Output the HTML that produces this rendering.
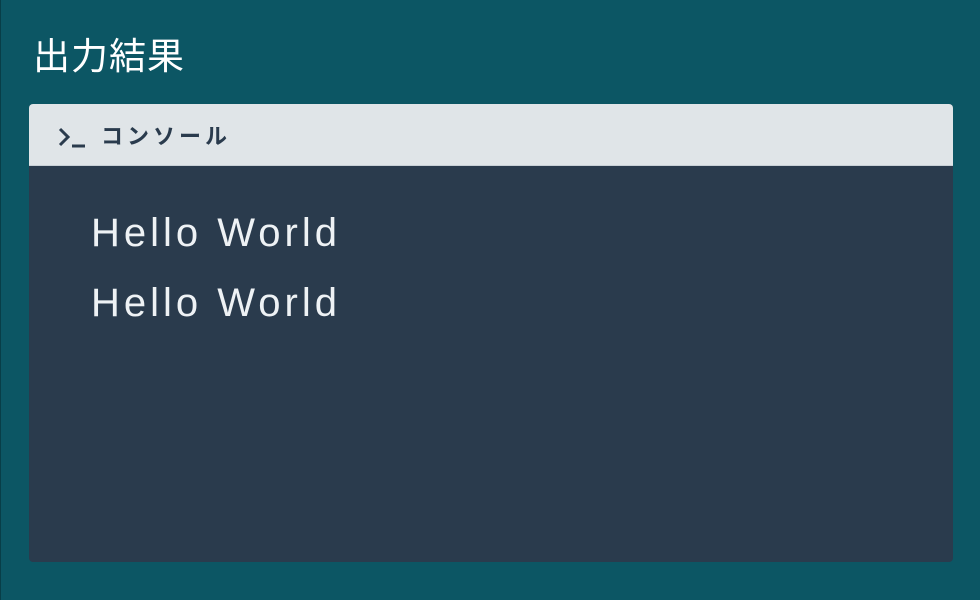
<!DOCTYPE html>
<html><head><meta charset="utf-8"><style>
html,body{margin:0;padding:0}
body{width:980px;height:600px;background:#0c5664;position:relative;overflow:hidden;font-family:"Liberation Sans","Noto Sans CJK JP",sans-serif;box-shadow:inset 1px 0 0 #083e48}
.t{position:absolute;left:33px;top:33px;font-size:37px;color:#fff;line-height:48px;letter-spacing:1px}
.p{position:absolute;left:29px;top:104px;width:924px;height:458px;background:#2a3b4d;border-radius:4px;overflow:hidden}
.h{height:61px;background:#e0e5e8;border-bottom:1px solid #c8d0d6;position:relative}
.h svg{position:absolute;left:29px;top:22px}
.h span{position:absolute;left:72px;top:20px;font-size:22px;font-weight:bold;color:#2a3b4d;letter-spacing:4px;line-height:26px}
.o{position:absolute;left:62px;font-size:40px;color:#eef2f5;letter-spacing:4px;font-weight:300;line-height:48px}
</style></head><body>
<div class="t">出力結果</div>
<div class="p">
<div class="h"><svg width="30" height="24" viewBox="0 0 30 24"><path d="M2 3 L10 11 L2 19" fill="none" stroke="#2a3b4d" stroke-width="3"/><path d="M14 20 H27" stroke="#2a3b4d" stroke-width="3"/></svg><span>コンソール</span></div>
<div class="o" style="top:105px">Hello World</div>
<div class="o" style="top:175px">Hello World</div>
</div>
</body></html>
